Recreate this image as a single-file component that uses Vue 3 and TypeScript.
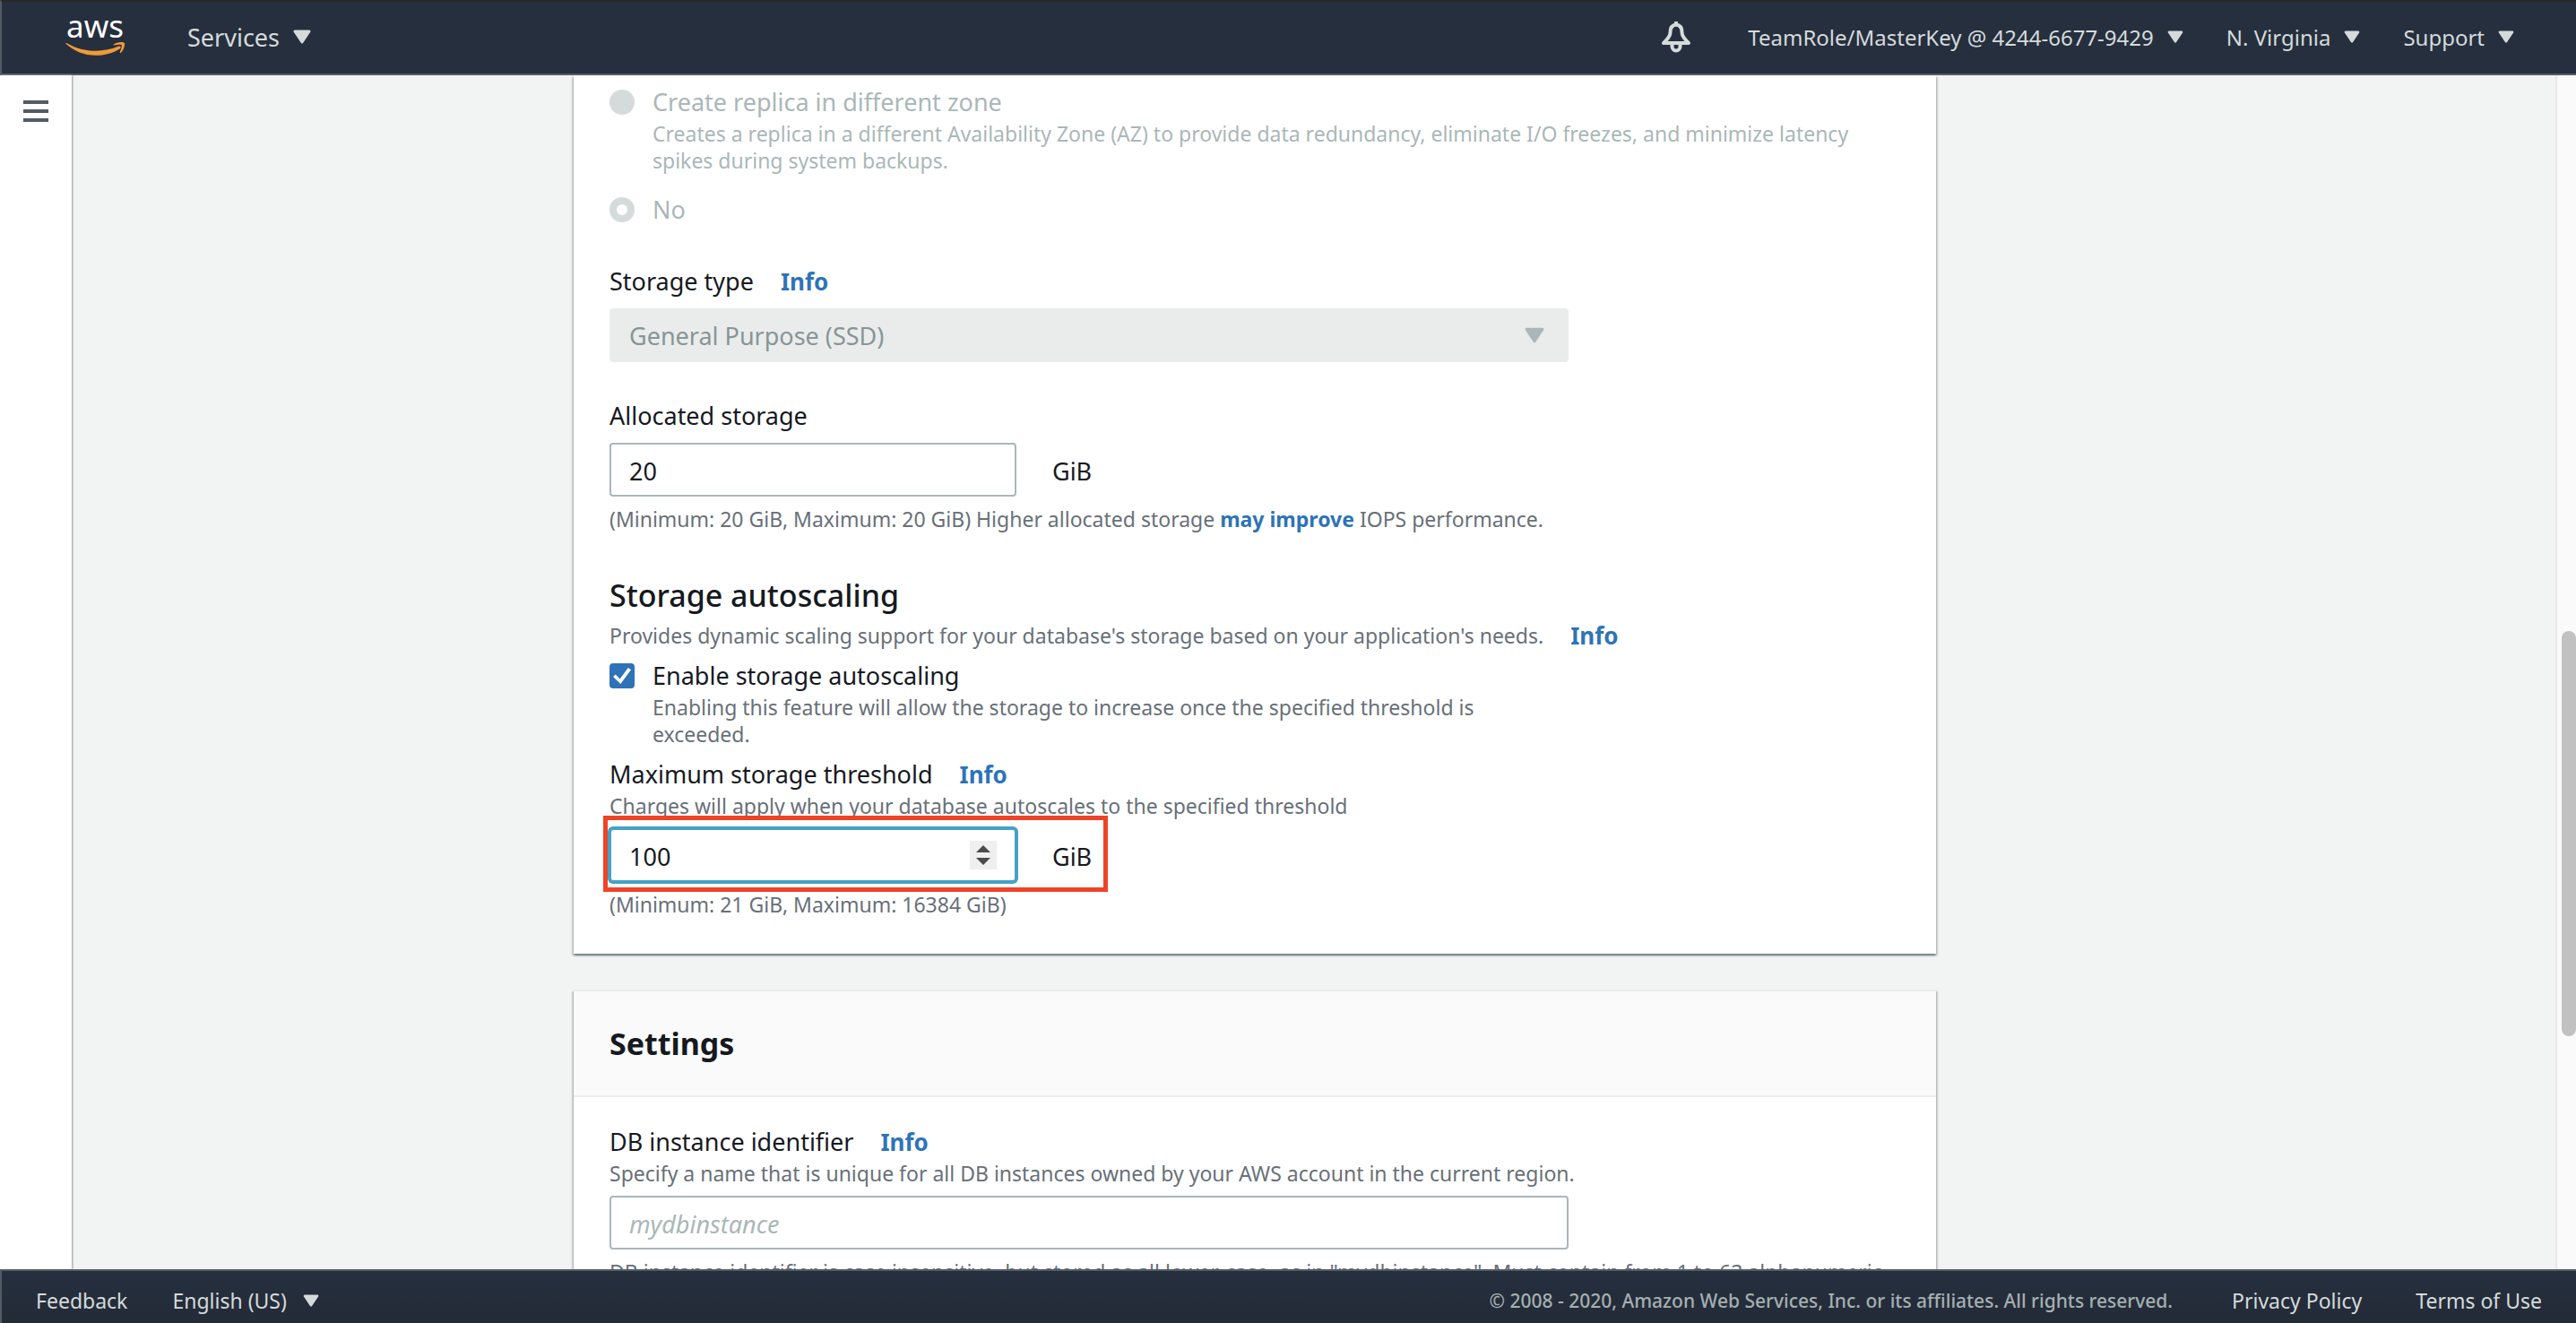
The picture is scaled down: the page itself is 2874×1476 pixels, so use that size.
<script setup lang="ts">
import { ref } from 'vue'

const replica = ref<'zone' | 'no'>('no')
const storageType = ref('General Purpose (SSD)')
const allocated = ref('20')
const autoscaling = ref(true)
const threshold = ref(100)
const identifier = ref('')

const accountMenus: string[] = ['TeamRole/MasterKey @ 4244-6677-9429', 'N. Virginia', 'Support']

function step(delta: number): void {
  threshold.value = Math.min(16384, Math.max(21, threshold.value + delta))
}
</script>

<template>
  <div class="console">
    <header class="topbar">
      <a class="logo" href="#" aria-label="AWS home">
        <svg width="68" height="74" viewBox="0 -14 68 74">
          <text x="1" y="24" class="logo-word">aws</text>
          <path
            fill="#f19b38"
            d="M1.2 30C20 41 42 41 59.5 33.6C61.5 33 62.5 35 61 36.2C53 41.5 43 43.8 34 43.8C21 43.8 9.5 39 .6 31C0 30.3 .5 29.7 1.2 30Z"
          />
          <path
            fill="#f19b38"
            d="M53.3 32C57 28.5 64 28.6 65.7 29.7C67 31.5 65 38 61.8 41C61 41.5 60.5 41 60.9 40C62 37 63.3 33.4 62.6 32.3C61.6 31.2 57 32 54 32.4Z"
          />
        </svg>
      </a>
      <button class="menu services" type="button">
        Services
        <svg class="caret" width="20" height="16" viewBox="0 0 20 16"><path d="M2 2H18L10 14Z" /></svg>
      </button>
      <button class="menu bell" type="button" aria-label="Notifications">
        <svg width="36" height="36" viewBox="0 0 36 36" fill="none" stroke="#d5dbdb" stroke-width="4" stroke-linejoin="round">
          <path d="M18 4.5C13.500 5 11.500 8.500 11.500 13C11.500 18.500 8 20.500 4 25H32C28 20.500 24.500 18.500 24.500 13C24.500 8.500 22.500 5 18 4.500Z" />
          <path d="M18 1V5M13.500 26V29A4.500 4.500 0 0 0 22.500 29V26" />
        </svg>
      </button>
      <nav class="account">
        <button v-for="item in accountMenus" :key="item" class="menu" type="button">
          {{ item }}
          <svg class="caret" width="18" height="14" viewBox="0 0 20 16"><path d="M2 2H18L10 14Z" /></svg>
        </button>
      </nav>
    </header>

    <div class="body">
      <aside class="rail">
        <button class="burger" type="button" aria-label="Open navigation">
          <span></span><span></span><span></span>
        </button>
      </aside>

      <main class="content">
        <form class="form" @submit.prevent>
          <section class="card storage">
            <div class="choice off">
              <input id="replica-zone" v-model="replica" type="radio" value="zone" disabled />
              <div>
                <label class="label" for="replica-zone">Create replica in different zone</label>
                <p class="hint">
                  Creates a replica in a different Availability Zone (AZ) to provide data redundancy, eliminate I/O
                  freezes, and minimize latency spikes during system backups.
                </p>
              </div>
            </div>
            <div class="choice off second">
              <input id="replica-no" v-model="replica" type="radio" value="no" disabled />
              <label class="label" for="replica-no">No</label>
            </div>

            <div class="field">
              <div class="label-row">
                <label class="label" for="storage-type">Storage type</label>
                <a class="info" href="#">Info</a>
              </div>
              <div class="select">
                <select id="storage-type" v-model="storageType" disabled>
                  <option>General Purpose (SSD)</option>
                </select>
                <svg class="caret" width="22" height="18" viewBox="0 0 20 16"><path d="M2 2H18L10 14Z" /></svg>
              </div>
            </div>

            <div class="field">
              <label class="label" for="allocated">Allocated storage</label>
              <div class="amount">
                <input id="allocated" v-model="allocated" class="box" type="text" />
                <span class="unit">GiB</span>
              </div>
              <p class="hint below">
                (Minimum: 20 GiB, Maximum: 20 GiB) Higher allocated storage <a href="#">may improve</a> IOPS performance.
              </p>
            </div>

            <div class="field">
              <h3>Storage autoscaling</h3>
              <div class="label-row note">
                <p class="hint">Provides dynamic scaling support for your database's storage based on your application's needs.</p>
                <a class="info" href="#">Info</a>
              </div>
              <div class="choice narrow">
                <input id="autoscaling" v-model="autoscaling" type="checkbox" />
                <div>
                  <label class="label" for="autoscaling">Enable storage autoscaling</label>
                  <p class="hint">
                    Enabling this feature will allow the storage to increase once the specified threshold is exceeded.
                  </p>
                </div>
              </div>
              <div class="label-row threshold">
                <label class="label" for="threshold">Maximum storage threshold</label>
                <a class="info" href="#">Info</a>
              </div>
              <p class="hint">Charges will apply when your database autoscales to the specified threshold</p>
              <div class="amount marked">
                <div class="number">
                  <input id="threshold" v-model.number="threshold" class="box active" type="number" min="21" max="16384" />
                  <span class="spinner">
                    <button type="button" aria-label="Increase" @click="step(1)">
                      <svg width="16" height="8" viewBox="0 0 16 8"><path d="M0 8L8 0L16 8Z" /></svg>
                    </button>
                    <button type="button" aria-label="Decrease" @click="step(-1)">
                      <svg width="16" height="8" viewBox="0 0 16 8"><path d="M0 0L8 8L16 0Z" /></svg>
                    </button>
                  </span>
                </div>
                <span class="unit">GiB</span>
              </div>
              <p class="hint below">(Minimum: 21 GiB, Maximum: 16384 GiB)</p>
            </div>
          </section>

          <section class="card settings">
            <div class="card-head"><h2>Settings</h2></div>
            <div class="card-body">
              <div class="label-row">
                <label class="label" for="identifier">DB instance identifier</label>
                <a class="info" href="#">Info</a>
              </div>
              <p class="hint">Specify a name that is unique for all DB instances owned by your AWS account in the current region.</p>
              <input id="identifier" v-model="identifier" class="box wide" type="text" placeholder="mydbinstance" />
              <p class="hint below long">
                DB instance identifier is case insensitive, but stored as all lower-case, as in "mydbinstance". Must contain from 1 to 63 alphanumeric
              </p>
            </div>
          </section>
        </form>
      </main>

      <div class="scrollbar" aria-hidden="true"><div class="thumb"></div></div>
    </div>

    <footer class="footer">
      <a href="#">Feedback</a>
      <button class="menu language" type="button">
        English (US)
        <svg class="caret" width="18" height="14" viewBox="0 0 20 16"><path d="M2 2H18L10 14Z" /></svg>
      </button>
      <small>© 2008 - 2020, Amazon Web Services, Inc. or its affiliates. All rights reserved.</small>
      <a class="privacy" href="#">Privacy Policy</a>
      <a class="terms" href="#">Terms of Use</a>
    </footer>
  </div>
</template>

<style>
body {
  background: #f2f4f3;
}
</style>

<style scoped>
.console {
  display: flex;
  flex-direction: column;
  height: 100vh;
  overflow: hidden;
  color: #16191f;
  font-family: "Noto Sans", "Open Sans", sans-serif;
  font-size: 27px;
  font-weight: 400;
}

.console *,
.console *::before,
.console *::after {
  box-sizing: border-box;
}

button,
input,
select {
  margin: 0;
  font: inherit;
  color: inherit;
}

button {
  padding: 0;
  border: 0;
  background: none;
  cursor: pointer;
}

h2,
h3,
p {
  margin: 0;
}

a {
  color: #2e73b8;
  font-weight: 700;
  text-decoration: none;
}

/* Top bar */
.topbar {
  display: flex;
  flex: none;
  align-items: center;
  height: 84px;
  padding: 0 69px 2px 71px;
  border-top: 2px solid #282828;
  border-bottom: 2px solid #545b64;
  border-left: 2px solid #545b64;
  background: #262f3e;
}

.logo {
  display: flex;
}

.logo-word {
  fill: #fff;
  font-size: 35px;
  font-weight: 400;
}

.menu {
  display: flex;
  align-items: center;
  gap: 15px;
  color: #d5dbdb;
  white-space: nowrap;
}

.caret {
  flex: none;
  fill: #d5dbdb;
  stroke: #d5dbdb;
  stroke-width: 3px;
  stroke-linejoin: round;
}

.services {
  margin-left: 68px;
}

.bell {
  margin-left: auto;
}

.account {
  display: flex;
  gap: 48px;
  margin-left: 62px;
  font-size: 24px;
}

/* Page body */
.body {
  display: flex;
  flex: 1;
  min-height: 0;
}

.rail {
  z-index: 1;
  flex: none;
  width: 80px;
  padding: 28px 26px;
  background: #fff;
  box-shadow: 1px 0 2px #8f989c;
}

.burger {
  display: flex;
  flex-direction: column;
  gap: 6px;
  width: 28px;
}

.burger span {
  height: 4px;
  background: #545b64;
}

.content {
  flex: 1;
  min-width: 0;
  overflow: hidden;
}

.form {
  display: grid;
  grid-template-columns: 560fr minmax(0, 1520px) 691fr;
  row-gap: 40px;
}

.card {
  grid-column: 2;
  background: #fff;
  box-shadow:
    0 2px 2px rgba(0, 28, 36, 0.4),
    2px 2px 2px rgba(0, 28, 36, 0.15),
    -2px 2px 2px rgba(0, 28, 36, 0.15);
}

.storage {
  padding: 10px 40px 40px;
}

.settings {
  border-top: 2px solid #eaeded;
}

.card-head {
  padding: 40px;
  border-bottom: 2px solid #eaeded;
  background: #fafafa;
}

.card-body {
  padding: 30px 40px 40px;
}

h2 {
  font-size: 34px;
  font-weight: 700;
  line-height: 36px;
}

h3 {
  font-size: 34px;
  font-weight: 500;
  line-height: 60px;
}

.label {
  display: block;
  line-height: 40px;
}

.hint {
  color: #687078;
  font-size: 23px;
  line-height: 30px;
}

.below {
  margin-top: 10px;
}

.long {
  white-space: nowrap;
}

.field {
  margin-top: 40px;
}

.label-row {
  display: flex;
  align-items: center;
  gap: 30px;
}

.info {
  font-size: 26px;
  line-height: 30px;
}

.note {
  margin-bottom: 10px;
}

.threshold {
  margin-top: 10px;
}

/* Radios and tick box */
.choice {
  display: flex;
  align-items: flex-start;
  gap: 20px;
}

.choice.second {
  margin-top: 20px;
}

.narrow {
  max-width: 1070px;
}

.choice input {
  flex: none;
  width: 28px;
  height: 28px;
  margin-top: 6px;
  appearance: none;
}

.off,
.off .hint {
  color: #aab7b8;
}

.choice input[type="radio"] {
  border-radius: 50%;
  background: #d5dbdb;
}

.choice input[type="radio"]:checked {
  border: 8px solid #d5dbdb;
  background: #fff;
}

.choice input[type="checkbox"] {
  display: grid;
  place-items: center;
  border-radius: 4px;
  border: 2px solid #aab7b8;
}

.choice input[type="checkbox"]:checked {
  border-color: #2e73b8;
  background: #2e73b8;
}

.choice input[type="checkbox"]:checked::after {
  content: "";
  width: 20px;
  height: 18px;
  background: #fff;
  clip-path: polygon(0 55%, 14% 42%, 38% 70%, 84% 0, 100% 12%, 42% 100%);
}

/* Text boxes and drop-down */
.box {
  display: block;
  width: 454px;
  height: 60px;
  padding: 2px 20px 0;
  border: 2px solid #aab7b8;
  border-radius: 4px;
  outline: none;
  background: #fff;
}

.wide {
  width: 100%;
  max-width: 1070px;
  margin-top: 10px;
}

.box::placeholder {
  color: #aab7b8;
  font-style: italic;
  opacity: 1;
}

.box.active {
  border-color: #44a2c7;
  box-shadow: 0 0 0 2px #44a2c7;
}

.box[type="number"] {
  appearance: textfield;
}

.box[type="number"]::-webkit-inner-spin-button {
  appearance: none;
}

.amount {
  display: flex;
  align-items: center;
  gap: 40px;
  width: fit-content;
  margin-top: 10px;
}

.unit {
  padding-top: 2px;
}

.number {
  position: relative;
}

.spinner {
  position: absolute;
  top: 14px;
  right: 22px;
  display: flex;
  flex-direction: column;
  justify-content: center;
  gap: 6px;
  width: 30px;
  height: 32px;
  background: #efefef;
}

.spinner button {
  display: flex;
  justify-content: center;
  fill: #4b4b4b;
}

.marked {
  position: relative;
}

.marked::after {
  content: "";
  position: absolute;
  inset: -14px -18px -11px -7px;
  border: 5px solid #ee4327;
  pointer-events: none;
}

.select {
  position: relative;
  max-width: 1070px;
  margin-top: 10px;
}

.select select {
  display: block;
  width: 100%;
  height: 60px;
  padding: 0 22px;
  border: 0;
  border-radius: 4px;
  background: #eaecec;
  color: #879596;
  opacity: 1;
  appearance: none;
}

.select .caret {
  position: absolute;
  top: 21px;
  right: 27px;
  fill: #aab7b8;
  stroke: #aab7b8;
}

/* Scroll track */
.scrollbar {
  display: flex;
  flex: none;
  flex-direction: column;
  width: 23px;
  padding-left: 5px;
  border-left: 2px solid #e7e7e7;
  background: #fafafa;
}

.scrollbar::before {
  content: "";
  flex: 620;
}

.scrollbar::after {
  content: "";
  flex: 260;
}

.thumb {
  flex: 452;
  border-radius: 8px;
  background: #c1c1c1;
}

/* Footer */
.footer {
  z-index: 1;
  display: flex;
  flex: none;
  align-items: center;
  height: 60px;
  padding: 8px 38px 0;
  border-top: 2px solid #545b64;
  border-left: 2px solid #545b64;
  background: linear-gradient(#262f3e, #232b37);
  color: #d5dbdb;
  font-size: 23px;
  line-height: 30px;
  white-space: nowrap;
}

.footer a {
  color: inherit;
  font-weight: 400;
}

.language {
  margin-left: 50px;
}

.language .caret {
  margin-left: 3px;
}

.footer small {
  margin-left: auto;
  color: #a5b0b1;
  font-size: 21px;
  font-weight: 500;
}

.privacy {
  margin-left: 66px;
}

.terms {
  margin-left: 60px;
}
</style>
